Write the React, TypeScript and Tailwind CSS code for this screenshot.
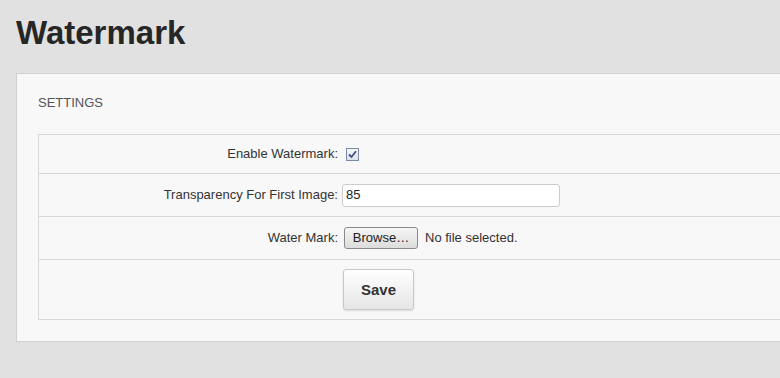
export default function App() {
  return (
    <div className="h-[378px] w-[780px] overflow-hidden bg-[#e1e1e1] pt-4 font-['Liberation_Sans',Arial,sans-serif] text-[#333]">
      <h1 className="pl-4 text-[33px] font-bold leading-none text-[#262626]">Watermark</h1>

      <div className="ml-4 mt-[24px] w-[800px] border border-[#d0d0d0] bg-[#f8f8f8] px-[21px] pb-[21px] pt-[21px]">
        <div className="text-[13px] leading-4 text-[#555]">SETTINGS</div>

        <div className="mt-[23px] border border-[#d8d8d8]">
          {/* enable */}
          <div className="flex h-[38px] items-center">
            <div className="w-[300px] pr-[1px] text-right text-[13px]">Enable Watermark:</div>
            <span className="ml-[7px] flex h-[13px] w-[13px] items-center justify-center border border-[#7b8aa6] bg-gradient-to-b from-[#f5f6f8] to-[#dde1e8]">
              <svg width="9" height="9" viewBox="0 0 9 9">
                <path d="M1 4.5 L3.5 7 L8 1.2" fill="none" stroke="#3d5285" strokeWidth="1.8" />
              </svg>
            </span>
          </div>

          {/* transparency */}
          <div className="flex h-[43px] items-center border-t border-[#d8d8d8]">
            <div className="w-[300px] pr-[1px] text-right text-[13px]">Transparency For First Image:</div>
            <div className="ml-[3px] flex h-[23px] w-[218px] items-center rounded-[3px] border border-[#cccccc] bg-white pl-[3px] text-[13px] text-[#222]">
              85
            </div>
          </div>

          {/* file */}
          <div className="flex h-[43px] items-center border-t border-[#d8d8d8]">
            <div className="w-[300px] pr-[1px] text-right text-[13px]">Water Mark:</div>
            <button className="ml-[5px] flex h-[22px] w-[74px] items-center justify-center rounded-[3px] border border-[#8a8a8a] bg-gradient-to-b from-[#f6f6f6] to-[#dcdcdc] text-[13px] text-[#222]">
              Browse…
            </button>
            <span className="ml-[7px] text-[13px] text-[#333]">No file selected.</span>
          </div>

          {/* save */}
          <div className="flex h-[60px] items-center border-t border-[#d8d8d8]">
            <div className="w-[300px]" />
            <button className="ml-[4px] flex h-[41px] w-[71px] items-center justify-center rounded-[3px] border border-[#c8c8c8] bg-gradient-to-b from-[#ffffff] to-[#e6e6e6] pt-[2px] text-[15px] font-bold text-[#333] shadow-[0_1px_2px_rgba(0,0,0,0.12)]">
              Save
            </button>
          </div>
        </div>
      </div>
    </div>
  );
}
